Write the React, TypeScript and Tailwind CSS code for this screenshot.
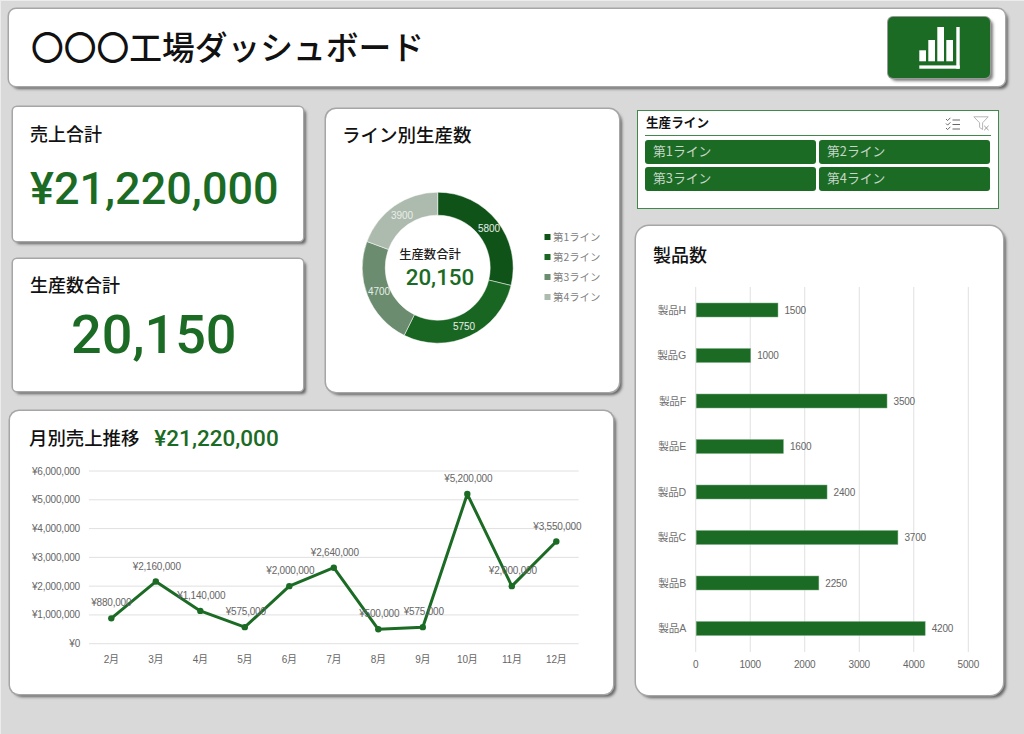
// 工場ダッシュボード
const CARD = 'bg-white shadow-[0_0_0_1.5px_#a6a6a6,3px_3px_3px_rgba(0,0,0,0.55)]'
const GREEN = '#1b6b25'
const LABEL = '#666666'

const lines = ['第1ライン', '第2ライン', '第3ライン', '第4ライン']

const donut = [
  { value: 5800, color: '#0f5318', x: 489, y: 228 },
  { value: 5750, color: '#196622', x: 464, y: 326 },
  { value: 4700, color: '#6b8c6f', x: 379, y: 291 },
  { value: 3900, color: '#adbbae', x: 402, y: 215 },
]

const months = [
  { m: '2月', v: 880000 },
  { m: '3月', v: 2160000 },
  { m: '4月', v: 1140000 },
  { m: '5月', v: 575000 },
  { m: '6月', v: 2000000 },
  { m: '7月', v: 2640000 },
  { m: '8月', v: 500000 },
  { m: '9月', v: 575000 },
  { m: '10月', v: 5200000 },
  { m: '11月', v: 2000000 },
  { m: '12月', v: 3550000 },
]

const products = [
  { name: '製品H', v: 1500 },
  { name: '製品G', v: 1000 },
  { name: '製品F', v: 3500 },
  { name: '製品E', v: 1600 },
  { name: '製品D', v: 2400 },
  { name: '製品C', v: 3700 },
  { name: '製品B', v: 2250 },
  { name: '製品A', v: 4200 },
]

function yen(v: number) {
  return '¥' + v.toLocaleString('en-US')
}

function arc(start: number, end: number) {
  const cx = 437.7
  const cy = 267.7
  const R = 75.5
  const r = 52.5
  const pt = (rad: number, a: number) => `${cx + rad * Math.sin(a)} ${cy - rad * Math.cos(a)}`
  const large = end - start > Math.PI ? 1 : 0
  return `M${pt(R, start)} A${R} ${R} 0 ${large} 1 ${pt(R, end)} L${pt(r, end)} A${r} ${r} 0 ${large} 0 ${pt(r, start)} Z`
}

function DonutChart() {
  const total = donut.reduce((s, d) => s + d.value, 0)
  let acc = 0
  return (
    <svg width={293} height={283} viewBox="326 109 293 283" className="block">
      <text x={342} y={142} fontSize={18.5} fontWeight={500} fill="#111111">ライン別生産数</text>
      {donut.map((d) => {
        const start = (acc / total) * Math.PI * 2
        acc += d.value
        const end = (acc / total) * Math.PI * 2
        return <path key={d.value} d={arc(start, end)} fill={d.color} stroke="#ffffff" strokeWidth={0.5} />
      })}
      {donut.map((d) => (
        <text key={d.value} x={d.x} y={d.y + 3.5} fontSize={10} textAnchor="middle" fill="#e8eee8" fontFamily="'Liberation Sans', sans-serif">{d.value}</text>
      ))}
      <text x={430} y={259} fontSize={12.3} fontWeight={500} textAnchor="middle" fill="#222222">生産数合計</text>
      <text x={440} y={285} fontSize={22.4} fontWeight={500} textAnchor="middle" fill={GREEN} fontFamily="Roboto, sans-serif">20,150</text>
      {donut.map((d, i) => (
        <g key={d.value}>
          <rect x={544.5} y={234 + i * 20} width={6} height={6} fill={d.color} />
          <text x={553} y={241 + i * 20} fontSize={10.4} fill="#808080">{lines[i]}</text>
        </g>
      ))}
    </svg>
  )
}

function LineChart() {
  const px = (i: number) => 111.3 + i * 44.5
  const py = (v: number) => 643.7 - (v / 1000000) * 28.78
  const points = months.map((d, i) => `${px(i)},${py(d.v)}`).join(' ')
  return (
    <svg width={603} height={283} viewBox="10 411 603 283" className="block tracking-[-0.2px] font-['Liberation_Sans','Noto_Sans_CJK_JP',sans-serif]">
      {[0, 1, 2, 3, 4, 5, 6].map((n) => (
        <g key={n}>
          <line x1={89} x2={578.7} y1={py(n * 1000000)} y2={py(n * 1000000)} stroke="#e0e0e0" strokeWidth={1} />
          <text x={80} y={py(n * 1000000) + 3.5} fontSize={10} textAnchor="end" fill={LABEL}>{yen(n * 1000000)}</text>
        </g>
      ))}
      {months.map((d, i) => (
        <text key={d.m} x={px(i)} y={663} fontSize={10} textAnchor="middle" fill={LABEL}>{d.m}</text>
      ))}
      <polyline points={points} fill="none" stroke={GREEN} strokeWidth={3} strokeLinejoin="round" />
      {months.map((d, i) => (
        <circle key={d.m} cx={px(i)} cy={py(d.v)} r={3.2} fill={GREEN} />
      ))}
      {months.map((d, i) => (
        <text key={d.m} x={px(i) + (i === 0 ? 0 : 1)} y={py(d.v) - 12} fontSize={10} textAnchor="middle" fill={LABEL}>{yen(d.v)}</text>
      ))}
    </svg>
  )
}

function BarChart() {
  const x0 = 695.7
  const scale = 272.6 / 5000
  return (
    <svg width={367} height={400} viewBox="636 287 367 400" className="block tracking-[-0.2px] font-['Liberation_Sans','Noto_Sans_CJK_JP',sans-serif]">
      {[0, 1000, 2000, 3000, 4000, 5000].map((n) => (
        <g key={n}>
          <line x1={x0 + n * scale} x2={x0 + n * scale} y1={287} y2={652} stroke="#e0e0e0" strokeWidth={1} />
          <text x={x0 + n * scale} y={668} fontSize={10} textAnchor="middle" fill={LABEL}>{n}</text>
        </g>
      ))}
      {products.map((p, i) => {
        const cy = 310 + i * 45.5
        return (
          <g key={p.name}>
            <text x={686} y={cy + 3.5} fontSize={10.6} textAnchor="end" fill="#707070">{p.name}</text>
            <rect x={x0 + 0.5} y={cy - 7} width={p.v * scale} height={14} fill={GREEN} stroke="#7fae84" strokeWidth={0.5} />
            <text x={x0 + p.v * scale + 7} y={cy + 3.5} fontSize={10} fill={LABEL}>{p.v}</text>
          </g>
        )
      })}
    </svg>
  )
}

function ReportIcon() {
  return (
    <svg width={102} height={61} viewBox="0 0 102 61" fill="#ffffff">
      <rect x={31.3} y={33.3} width={6.7} height={11} />
      <rect x={40.3} y={23} width={6.7} height={21.3} />
      <rect x={49.3} y={10} width={6.7} height={34.3} />
      <rect x={58.3} y={23} width={6.7} height={21.3} />
      <rect x={68.3} y={10} width={3.4} height={41.7} />
      <rect x={31.3} y={48.4} width={40.4} height={3.3} />
    </svg>
  )
}

function MultiSelectIcon() {
  return (
    <svg width={16} height={14} viewBox="0 0 16 14" fill="none" stroke="#666666" strokeWidth={1}>
      <path d="M1 2 L2.6 3.6 L5.4 0.8" />
      <path d="M1 6.5 L2.6 8.1 L5.4 5.3" />
      <path d="M1 11 L2.6 12.6 L5.4 9.8" />
      <path d="M7.5 3 H15 M7.5 7.5 H15 M7.5 12 H15" />
    </svg>
  )
}

function ClearFilterIcon() {
  return (
    <svg width={17} height={15} viewBox="0 0 17 15" fill="none" stroke="#b5b5b5" strokeWidth={1}>
      <path d="M0.8 0.8 H15.2 L9.6 6.8 V13.5 L6.6 11.4 V6.8 Z" />
      <path d="M11.2 9.8 L15.6 14.2 M15.6 9.8 L11.2 14.2" stroke="#9a9a9a" />
    </svg>
  )
}

export default function App() {
  return (
    <div className="w-[1024px] h-[734px] overflow-hidden bg-[#d9d9d9] border-l border-t border-[#ececec] pl-[8px] pt-[8px] font-['Noto_Sans_CJK_JP',sans-serif]">
      {/* ヘッダー */}
      <header className={`w-[996px] h-[77px] rounded-[7px] flex items-center justify-between pl-[22px] pr-[15px] ${CARD}`}>
        <h1 className="text-[32.75px] leading-none font-medium text-[#111111] -translate-y-[1px]">〇〇〇工場ダッシュボード</h1>
        <div className="w-[102px] h-[61px] rounded-[5px] bg-[#1b6b25] shadow-[0_0_0_1px_#999999,3px_3px_3px_rgba(0,0,0,0.5)]">
          <ReportIcon />
        </div>
      </header>

      <div className="flex mt-[21px]">
        <div className="w-[627px] shrink-0">
          <div className="flex pl-[4px]">
            <div className="w-[290px]">
              {/* 売上合計 */}
              <section className={`h-[134px] rounded-[4px] pl-[17px] pt-[13px] ${CARD}`}>
                <h2 className="text-[18px] leading-[26px] font-medium text-[#111111]">売上合計</h2>
                <p className="mt-[15px] text-[45px] leading-[56px] font-medium text-[#1b6b25] font-['Roboto',sans-serif]">¥21,220,000</p>
              </section>
              {/* 生産数合計 */}
              <section className={`mt-[18px] h-[132px] rounded-[4px] pl-[17px] pt-[12px] ${CARD}`}>
                <h2 className="text-[18px] leading-[26px] font-medium text-[#111111]">生産数合計</h2>
                <p className="mt-[4px] pl-[41px] text-[54px] leading-[68px] font-medium text-[#1b6b25] font-['Roboto',sans-serif]">20,150</p>
              </section>
            </div>
            {/* ライン別生産数 */}
            <section className={`ml-[23px] mt-[2px] w-[293px] h-[283px] rounded-[10px] overflow-hidden ${CARD}`}>
              <DonutChart />
            </section>
          </div>

          {/* 月別売上推移 */}
          <section className={`ml-[1px] mt-[19px] w-[603px] h-[283px] rounded-[9px] relative ${CARD}`}>
            <div className="absolute left-[19px] top-[9px] flex items-center">
              <h2 className="text-[18.4px] leading-[32px] font-medium text-[#111111]">月別売上推移</h2>
              <p className="ml-[15px] mt-[2px] text-[22.5px] leading-[32px] font-medium text-[#1b6b25] font-['Roboto',sans-serif]">¥21,220,000</p>
            </div>
            <LineChart />
          </section>
        </div>

        <div>
          {/* スライサー */}
          <section className="ml-[1px] mt-[3px] w-[362px] h-[99px] bg-white border border-[#3f8a48] px-[7px] pt-[1px]">
            <div className="h-[24px] flex items-center justify-between border-b border-[#3f8a48]">
              <h2 className="text-[12.6px] leading-none font-bold text-[#111111] pl-[1px] pb-[2px]">生産ライン</h2>
              <div className="flex items-center gap-[12px] pr-[1px]">
                <MultiSelectIcon />
                <ClearFilterIcon />
              </div>
            </div>
            <div className="grid grid-cols-2 gap-x-[3px] gap-y-[3px] mt-[4px] w-[345px]">
              {lines.map((l) => (
                <div key={l} className="h-[24px] rounded-[3px] bg-[#1b6b25] pl-[8px] text-[12.8px] leading-[22px] text-[#c6d6c8]">{l}</div>
              ))}
            </div>
          </section>

          {/* 製品数 */}
          <section className={`mt-[17px] w-[367px] h-[469px] rounded-[13px] overflow-hidden ${CARD}`}>
            <h2 className="pl-[17px] pt-[15px] h-[61px] text-[18px] leading-[26px] font-medium text-[#111111]">製品数</h2>
            <BarChart />
          </section>
        </div>
      </div>
    </div>
  )
}
